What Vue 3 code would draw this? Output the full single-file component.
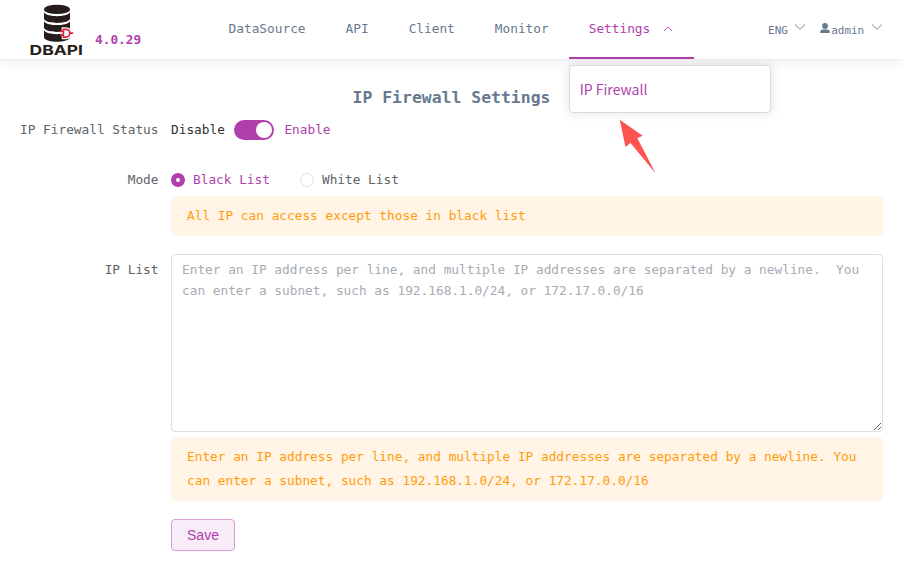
<template>
  <div class="page">
    <header class="header">
      <svg class="logo" width="56" height="59" viewBox="0 0 56 59">
        <g fill="#251c1b">
          <ellipse cx="28" cy="9.4" rx="13" ry="4.7" />
          <path d="M15 12.300c3 5.200 23 5.200 26 0v6.700c-3 5.200-23 5.200-26 0z" />
          <path d="M15 21.200c3 5.200 23 5.200 26 0v6.800c-3 5.200-23 5.200-26 0z" />
          <path d="M15 30.300c3 5.200 23 5.200 26 0v7.500c-3 5.400-23 5.400-26 0z" />
        </g>
        <path
          d="M34.500 29h2.500a4.200 4.200 0 0 1 0 8.400h-2.500z"
          fill="#fff"
          stroke="#fff"
          stroke-width="3.600"
        />
        <path
          d="M34.400 29.300h2.600a3.900 3.900 0 0 1 0 7.800h-2.600zM31.200 31.300h3M31.200 35.100h3M41 33.200h3.200"
          fill="none"
          stroke="#dc2440"
          stroke-width="1.700"
        />
        <text x="0.5" y="55" textLength="53.500" lengthAdjust="spacingAndGlyphs">DBAPI</text>
      </svg>
      <span class="version">4.0.29</span>
      <nav class="menu">
        <div
          v-for="item in menus"
          :key="item"
          class="menu-item"
          :class="{ active: activeMenu === item }"
          @click="activeMenu = item"
        >
          {{ item }}
          <template v-if="item === 'Settings'">
            <svg class="caret" width="12" height="12" viewBox="0 0 12 12">
              <path d="M1.800 8 6 4l4.200 4" />
            </svg>
            <div v-if="activeMenu === item" class="submenu">IP Firewall</div>
          </template>
        </div>
      </nav>
      <div class="dropdown lang">
        <span>ENG</span>
        <svg class="arrow" width="12" height="8" viewBox="0 0 12 8">
          <path d="M1 1.500 6 6.300l5-4.800" />
        </svg>
      </div>
      <div class="dropdown user">
        <svg class="avatar" width="10" height="11" viewBox="0 0 10 11">
          <circle cx="5" cy="3" r="2.900" />
          <path d="M.300 10V8.400Q.300 6.400 3 6.400h4q2.700 0 2.700 2V10z" />
        </svg>
        <span>admin</span>
        <svg class="arrow" width="12" height="8" viewBox="0 0 12 8">
          <path d="M1 1.500 6 6.300l5-4.800" />
        </svg>
      </div>
    </header>

    <main class="content">
      <h2 class="title">IP Firewall Settings</h2>

      <div class="row status">
        <label class="label">IP Firewall Status</label>
        <div class="switch" @click="enabled = !enabled">
          <span :class="{ on: !enabled }">Disable</span>
          <i class="track" :class="{ checked: enabled }"></i>
          <span :class="{ on: enabled }">Enable</span>
        </div>
      </div>

      <div class="row mode-row">
        <label class="label">Mode</label>
        <div class="field">
          <div class="radios">
            <div
              v-for="m in modes"
              :key="m"
              class="radio"
              :class="{ checked: mode === m }"
              @click="mode = m"
            >
              <i class="dot"></i>
              <span>{{ m }}</span>
            </div>
          </div>
          <div class="tip">All IP can access except those in black list</div>
        </div>
      </div>

      <div class="row">
        <label class="label">IP List</label>
        <div class="field">
          <textarea v-model="ipList" class="textarea" :placeholder="placeholder"></textarea>
          <div class="tip">
            Enter an IP address per line, and multiple IP addresses are separated by a newline. You
            can enter a subnet, such as 192.168.1.0/24, or 172.17.0.0/16
          </div>
          <button class="save">Save</button>
        </div>
      </div>
    </main>

    <svg class="pointer" width="38" height="56" viewBox="0 0 38 56">
      <path d="M.700.700 23.800 16.800 18.300 19 36.500 54.300 11.500 24 6.500 28z" />
    </svg>
  </div>
</template>

<script setup>
import { ref } from 'vue'

const menus = ['DataSource', 'API', 'Client', 'Monitor', 'Settings']
const activeMenu = ref('Settings')

const enabled = ref(true)
const modes = ['Black List', 'White List']
const mode = ref('Black List')
const ipList = ref('')
const placeholder =
  'Enter an IP address per line, and multiple IP addresses are separated by a newline.  You can enter a subnet, such as 192.168.1.0/24, or 172.17.0.0/16'
</script>

<style>
body {
  margin: 0;
  background: #fff;
}
</style>

<style scoped>
.page {
  position: relative;
  width: 903px;
  height: 584px;
  overflow: hidden;
  box-sizing: border-box;
  font-family: Consolas, 'DejaVu Sans Mono', monospace;
  font-size: 12.79px;
  color: #303133;
}

.header {
  display: flex;
  height: 59px;
  border-bottom: 1px solid #eeeeee;
  box-shadow: 0 2px 12px 0 rgba(0, 0, 0, 0.07);
}
.logo {
  flex: none;
  margin-left: 29px;
}
.logo text {
  font: bold 13.5px Inter, 'Liberation Sans', sans-serif;
  fill: #251c1b;
}
.version {
  width: 47px;
  margin-left: 10px;
  line-height: 79px;
  font-weight: bold;
  color: #b03fae;
}

.menu {
  display: flex;
  margin-left: 66.6px;
}
.menu-item {
  position: relative;
  display: flex;
  align-items: center;
  box-sizing: border-box;
  height: 59px;
  padding: 0 20px;
  color: #67798e;
  border-bottom: 2px solid transparent;
  white-space: nowrap;
}
.menu-item.active {
  color: #b03fae;
  border-bottom-color: #b03fae;
}
.caret {
  margin: 1px 0 0 11.4px;
  fill: none;
  stroke: currentColor;
  stroke-width: 0.9;
}
.submenu {
  position: absolute;
  top: 65px;
  left: 0;
  z-index: 10;
  box-sizing: border-box;
  width: 202px;
  height: 48px;
  padding-left: 10px;
  line-height: 47px;
  border: 1px solid #d9d9e5;
  border-radius: 4px;
  background: #fff;
  box-shadow: 0 0 12px rgba(0, 0, 0, 0.12);
  font-family: 'Noto Sans CJK SC', sans-serif;
  font-size: 14px;
}

.dropdown {
  display: flex;
  height: 59px;
  line-height: 61px;
  font-size: 10.96px;
  color: #67798e;
}
.lang {
  margin-left: 74.4px;
}
.user {
  margin-left: 14px;
}
.arrow {
  margin: 23px 0 0 6.4px;
  fill: none;
  stroke: #7d8896;
}
.avatar {
  margin: 23px 1px 0 0;
  fill: #67798e;
}

.content {
  padding: 0 20px;
}
.title {
  margin: 26px 0 0;
  line-height: 24px;
  font-size: 16.44px;
  text-align: center;
  color: #67798e;
}
.row {
  display: flex;
}
.label {
  flex: none;
  width: 138.5px;
  margin-right: 12.5px;
  line-height: 32px;
  text-align: right;
  color: #606266;
}
.field {
  flex: 1;
  min-width: 0;
}
.status {
  margin-top: 4px;
}
.switch {
  display: flex;
  align-items: center;
  height: 32px;
}
.switch span,
.radio span {
  padding-bottom: 2px;
}
.switch .on {
  color: #b03fae;
}
.track {
  display: flex;
  align-items: center;
  box-sizing: border-box;
  width: 40px;
  height: 20px;
  margin: 0 10.500px 0 9px;
  padding: 0 2px;
  border-radius: 10px;
  background: #dcdfe6;
}
.track::after {
  content: '';
  width: 16px;
  height: 16px;
  border-radius: 50%;
  background: #fff;
}
.track.checked {
  justify-content: flex-end;
  background: #b03fae;
}

.mode-row {
  margin: 18px 0;
}
.radios {
  display: flex;
  gap: 30px;
  height: 32px;
}
.radio {
  display: flex;
  align-items: center;
  color: #606266;
}
.radio.checked {
  color: #b03fae;
}
.dot {
  box-sizing: border-box;
  width: 14px;
  height: 14px;
  margin-right: 8px;
  border: 1px solid #dcdfe6;
  border-radius: 50%;
}
.radio.checked .dot {
  border: 5px solid #b03fae;
}

.tip {
  padding: 8px 16px;
  line-height: 24px;
  border-radius: 5px;
  background: #fff4e6;
  color: #ff9c08;
}
.textarea {
  display: block;
  box-sizing: border-box;
  width: 100%;
  height: 178px;
  margin: 0 0 5px;
  padding: 4px 10px;
  border: 1px solid #dcdfe6;
  border-radius: 4px;
  outline: none;
  resize: vertical;
  font: inherit;
  line-height: 21px;
}
.textarea::placeholder {
  color: #a8abb2;
}
.save {
  display: block;
  width: 64px;
  height: 32px;
  margin-top: 18px;
  padding: 0;
  border: 1px solid #d79fd6;
  border-radius: 4px;
  background: #f7ecf7;
  color: #b03fae;
  font-family: 'Liberation Sans', Arial, sans-serif;
  font-size: 14px;
}

/* hint arrow floating over the form */
.pointer {
  position: absolute;
  top: 119px;
  left: 619px;
  fill: #ff5350;
}
</style>
